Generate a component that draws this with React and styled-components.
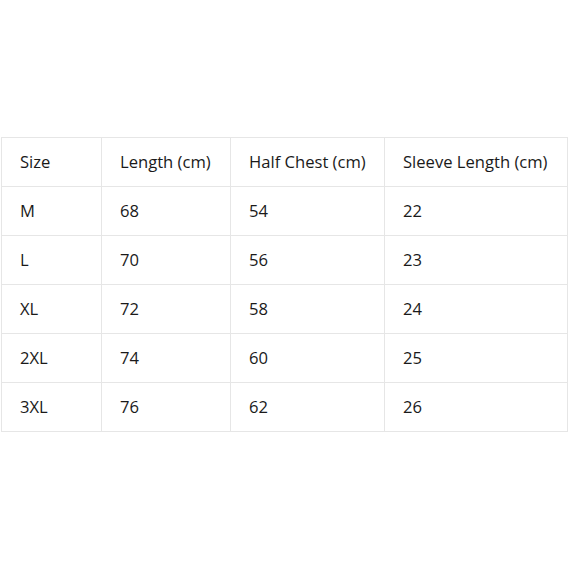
import styled, { createGlobalStyle } from "styled-components";

const GlobalStyle = createGlobalStyle`
  html, body {
    margin: 0;
    background: #ffffff;
  }
`;

const columns = ["Size", "Length (cm)", "Half Chest (cm)", "Sleeve Length (cm)"];
const widths = [100, 129, 154, 183];

const rows = [
  ["M", "68", "54", "22"],
  ["L", "70", "56", "23"],
  ["XL", "72", "58", "24"],
  ["2XL", "74", "60", "25"],
  ["3XL", "76", "62", "26"],
];

const App = () => {
  return (
    <Page>
      <GlobalStyle />
      <Table>
        <colgroup>
          {widths.map((w, i) => (
            <col key={i} style={{ width: w }} />
          ))}
        </colgroup>
        <tbody>
          <Row>
            {columns.map((c) => (
              <Cell key={c}>{c}</Cell>
            ))}
          </Row>
          {rows.map((r) => (
            <Row key={r[0]}>
              {r.map((v, i) => (
                <Cell key={i}>{v}</Cell>
              ))}
            </Row>
          ))}
        </tbody>
      </Table>
    </Page>
  );
};

const Page = styled.div`
  width: 569px;
  height: 569px;
  padding: 137px 0 0 1px;
  box-sizing: border-box;
  background: #ffffff;
`;

const Table = styled.table`
  width: 567px;
  border-collapse: collapse;
  table-layout: fixed;
  font-family: "Open Sans", "Noto Sans", sans-serif;
  font-size: 16.6px;
  color: #1a1a1a;
`;

const Row = styled.tr`
  height: 49px;
`;

const Cell = styled.td`
  border: 1px solid #e6e6e6;
  padding: 0 0 2px 18px;
  text-align: left;
  vertical-align: middle;
  white-space: nowrap;
`;

export default App;
